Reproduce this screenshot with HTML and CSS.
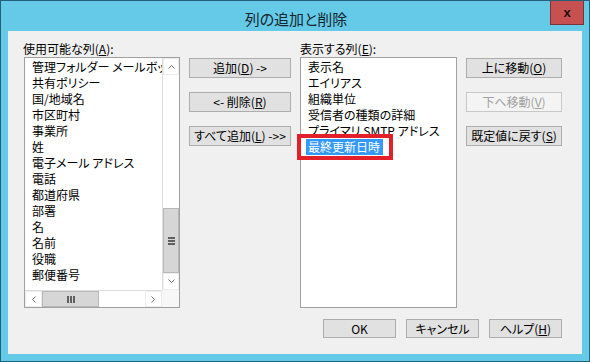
FILE: index.html
```html
<!DOCTYPE html>
<html lang="ja">
<head>
<meta charset="utf-8">
<title>列の追加と削除</title>
<link rel="stylesheet" href="styles.css">
</head>
<body>
<div class="window">
  <div class="titlebar">
    <span class="title">列の追加と削除</span>
    <button class="close" type="button" aria-label="閉じる">x</button>
  </div>
  <div class="content">
    <div class="columns">
      <div class="label lbl-left">使用可能な列(<u>A</u>):</div>
      <div class="label lbl-right">表示する列(<u>E</u>):</div>

      <div class="listbox available">
        <ul class="items clip">
          <li>管理フォルダー メールボックス ポリシー</li>
          <li>共有ポリシー</li>
          <li>国/地域名</li>
          <li>市区町村</li>
          <li>事業所</li>
          <li>姓</li>
          <li>電子メール アドレス</li>
          <li>電話</li>
          <li>都道府県</li>
          <li>部署</li>
          <li>名</li>
          <li>名前</li>
          <li>役職</li>
          <li>郵便番号</li>
        </ul>
        <div class="vscroll">
          <div class="arrow"><svg width="7" height="5" viewBox="0 0 7 5"><polyline points="0.5,4.5 3.5,1.5 6.5,4.5" fill="none" stroke="#6a6a6a" stroke-width="1"/></svg></div>
          <div class="vtrack"><div class="thumb vthumb"><span class="grip-h"></span></div></div>
          <div class="arrow"><svg width="7" height="5" viewBox="0 0 7 5"><polyline points="0.5,0.5 3.5,3.5 6.5,0.5" fill="none" stroke="#6a6a6a" stroke-width="1"/></svg></div>
        </div>
        <div class="hscroll">
          <div class="arrow"><svg width="5" height="7" viewBox="0 0 5 7"><polyline points="4.5,0.5 1.5,3.5 4.5,6.5" fill="none" stroke="#6a6a6a" stroke-width="1"/></svg></div>
          <div class="htrack"><div class="thumb hthumb"><span class="grip-v"></span></div></div>
          <div class="arrow"><svg width="5" height="7" viewBox="0 0 5 7"><polyline points="0.5,0.5 3.5,3.5 0.5,6.5" fill="none" stroke="#6a6a6a" stroke-width="1"/></svg></div>
        </div>
        <div class="corner"></div>
      </div>

      <div class="btncol mid">
        <button type="button" class="btn">追加(<u>D</u>) -&gt;</button>
        <button type="button" class="btn">&lt;- 削除(<u>R</u>)</button>
        <button type="button" class="btn">すべて追加(<u>L</u>) -&gt;&gt;</button>
      </div>

      <div class="listbox shown">
        <ul class="items">
          <li>表示名</li>
          <li>エイリアス</li>
          <li>組織単位</li>
          <li>受信者の種類の詳細</li>
          <li>プライマリ SMTP アドレス</li>
          <li class="selected"><span class="sel">最終更新日時</span><span class="annot"></span></li>
        </ul>
      </div>

      <div class="btncol side">
        <button type="button" class="btn">上に移動(<u>O</u>)</button>
        <button type="button" class="btn" disabled>下へ移動(<u>V</u>)</button>
        <button type="button" class="btn">既定値に戻す(<u>S</u>)</button>
      </div>
    </div>

    <div class="footer">
      <button type="button" class="btn foot">OK</button>
      <button type="button" class="btn foot">キャンセル</button>
      <button type="button" class="btn foot">ヘルプ(<u>H</u>)</button>
    </div>
  </div>
</div>
</body>
</html>
```

FILE: styles.css
```css
* {
  box-sizing: border-box;
}

html,
body {
  margin: 0;
  padding: 0;
}

body {
  width: 590px;
  height: 362px;
  overflow: hidden;
  font-family: "Noto Sans CJK JP", "Noto Sans", sans-serif;
  font-size: 12px;
  font-feature-settings: "palt";
  color: #000;
  background: #f0f0f0;
}

.window {
  width: 590px;
  height: 362px;
  border: 1px solid #23607b;
  background: #64cae8;
  display: flex;
  flex-direction: column;
}

.titlebar {
  height: 30px;
  flex: none;
  display: grid;
  grid-template-columns: 1fr auto 1fr;
  padding: 0 5px 0 7px;
}

.title {
  grid-column: 2;
  font-size: 15px;
  line-height: 24px;
  padding-top: 6px;
  color: #17252e;
}

.close {
  grid-column: 3;
  justify-self: end;
  align-self: start;
  width: 34px;
  height: 24px;
  margin: 0;
  padding: 0;
  border: 1px solid #7d3434;
  border-top: none;
  background: #c75050;
  color: #1e1010;
  font-family: "Liberation Sans", sans-serif;
  font-size: 13px;
  font-weight: bold;
  line-height: 20px;
  text-align: center;
}

.content {
  flex: 1;
  margin: 0 7px 7px;
  background: #f0f0f0;
  padding: 10px 20px 0 16px;
}

.columns {
  display: grid;
  grid-template-columns: 156px 102px 157px 96px;
  grid-template-rows: 16px 251px;
  column-gap: 9px;
}

.label {
  line-height: 16px;
  white-space: nowrap;
}

.lbl-left {
  grid-column: 1;
  grid-row: 1;
  margin-left: -1px;
}

.lbl-right {
  grid-column: 3;
  grid-row: 1;
}

.listbox {
  grid-row: 2;
  border: 1px solid #a0a0a0;
  background: #fff;
}

.available {
  grid-column: 1;
  display: grid;
  grid-template-columns: 1fr 17px;
  grid-template-rows: 1fr 17px;
}

.shown {
  grid-column: 3;
}

.items {
  list-style: none;
  margin: 0;
  padding: 1px 0 0;
  white-space: nowrap;
}

.items.clip {
  overflow: hidden;
  grid-column: 1;
  grid-row: 1;
}

.items li {
  height: 16px;
  line-height: 16px;
  padding-left: 7px;
}

.items li.selected {
  position: relative;
}

.sel {
  display: inline-block;
  height: 16px;
  line-height: 16px;
  margin-left: -2px;
  padding: 0 3px 0 2px;
  background: #3399ff;
  color: #fff;
}

.annot {
  position: absolute;
  left: -4px;
  top: -5px;
  width: 96px;
  height: 26px;
  border: 4px solid #e3202a;
}

.vscroll {
  grid-column: 2;
  grid-row: 1;
  display: flex;
  flex-direction: column;
  background: #fff;
  border-left: 1px solid #dedede;
}

.hscroll {
  grid-column: 1;
  grid-row: 2;
  display: flex;
  background: #fff;
  border-top: 1px solid #dedede;
}

.corner {
  grid-column: 2;
  grid-row: 2;
  background: #f7f7f7;
}

.arrow {
  flex: none;
  width: 16px;
  height: 17px;
  display: flex;
  align-items: center;
  justify-content: center;
  background: #fff;
  border: 1px solid #ececec;
}

.hscroll .arrow {
  width: 17px;
  height: 16px;
}

.vtrack {
  flex: 1;
  display: flex;
  flex-direction: column;
  justify-content: flex-end;
}

.htrack {
  flex: 1;
  display: flex;
}

.thumb {
  display: flex;
  align-items: center;
  justify-content: center;
  background: #d6d6d6;
  border: 1px solid #b8b8b8;
}

.vthumb {
  height: 65px;
}

.hthumb {
  width: 57px;
}

.grip-h {
  width: 7px;
  height: 8px;
  background: linear-gradient(to bottom, #606060 0 2px, transparent 2px 3px, #606060 3px 5px, transparent 5px 6px, #606060 6px 8px);
}

.grip-v {
  width: 8px;
  height: 7px;
  background: linear-gradient(to right, #606060 0 2px, transparent 2px 3px, #606060 3px 5px, transparent 5px 6px, #606060 6px 8px);
}

.btncol {
  grid-row: 2;
  display: flex;
  flex-direction: column;
  gap: 14px;
  padding-top: 1px;
}

.mid {
  grid-column: 2;
}

.side {
  grid-column: 4;
}

.btn {
  height: 20px;
  margin: 0;
  padding: 0;
  border: 1px solid #adadad;
  background: #e1e1e1;
  color: #000;
  font: inherit;
  font-size: 12px;
  line-height: 18px;
  white-space: nowrap;
  text-align: center;
}

.btn:disabled {
  border-color: #c8c8c8;
  background: #f4f4f4;
  color: #a0a0a0;
}

.footer {
  display: flex;
  justify-content: flex-end;
  gap: 10px;
  margin-top: 11px;
}

.btn.foot {
  width: 73px;
  height: 19px;
  line-height: 17px;
}
```
